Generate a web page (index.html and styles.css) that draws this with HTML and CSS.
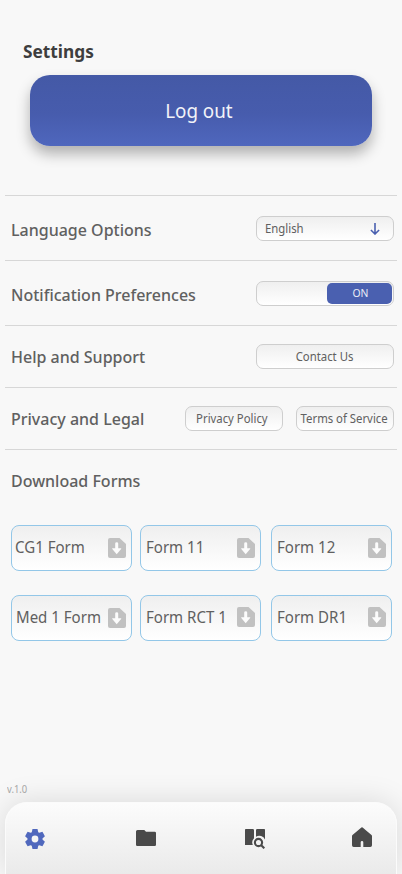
FILE: index.html
```html
<!DOCTYPE html>
<html lang="en">
<head>
<meta charset="utf-8">
<title>Settings</title>
<link rel="stylesheet" href="styles.css">
</head>
<body>
<svg class="defs" width="0" height="0" aria-hidden="true">
  <symbol id="download" viewBox="0 0 18 20">
    <path fill="#c1c1c1" d="M2 0h9.500l6.500 6v12a2 2 0 0 1-2 2H2a2 2 0 0 1-2-2V2a2 2 0 0 1 2-2z"/>
    <path fill="#fcfcfc" d="M7.200 5.500q0-1.200 1.500-1.200t1.500 1.200v4.800h2.900q.4.300 0 .8L8.700 16.200 4.300 11.100q-.4-.500 0-.8h2.900z"/>
  </symbol>
</svg>
<main class="screen">
  <h1 class="title"><span>Settings</span></h1>
  <button class="logout"><span>Log out</span></button>
  <section class="rows">
    <div class="row tall"><h2>Language Options</h2>
      <button class="pill wide select"><span class="label">English</span>
        <svg width="10" height="12" viewBox="0 0 10 12"><path d="M5 0v11M.900 7l4.100 4L9.100 7" fill="none" stroke="#4a60b0" stroke-width="1.600"/></svg>
      </button></div>
    <div class="row tall"><h2>Notification Preferences</h2>
      <div class="pill wide toggle"><span class="knob"><span class="label">ON</span></span></div></div>
    <div class="row"><h2>Help and Support</h2><button class="pill wide"><span class="label">Contact Us</span></button></div>
    <div class="row"><h2>Privacy and Legal</h2>
      <div class="pair"><button class="pill policy"><span class="label">Privacy Policy</span></button><button class="pill terms"><span class="label">Terms of Service</span></button></div></div>
    <div class="row"><h2>Download Forms</h2></div>
  </section>
  <section class="forms">
    <button class="form first"><span>CG1 Form</span><svg width="18" height="20"><use href="#download"/></svg></button>
    <button class="form"><span>Form 11</span><svg width="18" height="20"><use href="#download"/></svg></button>
    <button class="form"><span>Form 12</span><svg width="18" height="20"><use href="#download"/></svg></button>
    <button class="form med"><span>Med 1 Form</span><svg width="18" height="20"><use href="#download"/></svg></button>
    <button class="form raised"><span>Form RCT 1</span><svg width="18" height="20"><use href="#download"/></svg></button>
    <button class="form raised"><span>Form DR1</span><svg width="18" height="20"><use href="#download"/></svg></button>
  </section>
  <p class="version"><span>v.1.0</span></p>
  <nav class="nav">
    <svg class="gear" width="20" height="20" viewBox="-10 -10 20 20">
      <g fill="#5068bd">
        <path id="tooth" d="M-2.500-10H2.500L3.400-6V6L2.500 10H-2.500L-3.400 6V-6z"/>
        <use href="#tooth" transform="rotate(60)"/>
        <use href="#tooth" transform="rotate(120)"/>
        <circle r="7.400"/>
      </g>
      <circle r="3.400" fill="#f5f5f5"/>
    </svg>
    <svg class="folder" width="20" height="16" viewBox="0 0 20 16"><path fill="#4a4a4a" d="M1.500 0H8.300l1.700 1.800h8.700A1.300 1.300 0 0 1 20 3.100v11.600a1.300 1.300 0 0 1-1.300 1.300H1.300A1.300 1.300 0 0 1 0 14.700V1.500A1.500 1.500 0 0 1 1.500 0z"/></svg>
    <svg class="book" width="20" height="20" viewBox="0 0 20 20">
      <path fill="#4a4a4a" d="M.800 0H7.800Q9 0 9 1.200V9.300a6 6 0 0 0-1.200 6.700H0V.8Q0 0 .8 0zM11 1.200Q11 0 12.200 0H19.200Q20 0 20 .8V10.500a6.300 6.300 0 0 0-9-2.800z"/>
      <circle cx="13.500" cy="13.500" r="3.600" fill="none" stroke="#4a4a4a" stroke-width="2.100"/><path d="M16 16l3.300 3.300" stroke="#4a4a4a" stroke-width="2.100"/>
    </svg>
    <svg class="home" width="20" height="20" viewBox="0 0 20 20"><path fill="#4a4a4a" d="M9.400.400q.6-.500 1.200 0L19.500 8q.5.500.5 1.200V18.300a1.700 1.700 0 0 1-1.700 1.700H11.300v-4.700a1.300 1.300 0 0 0-2.600 0V20H1.700A1.700 1.700 0 0 1 0 18.300V9.200Q0 8.500.5 8z"/></svg>
  </nav>
</main>
</body>
</html>
```
FILE: styles.css
```css
* { box-sizing: border-box; }
body { margin: 0; background: #f8f8f8; font-family: "Noto Sans", sans-serif; color: #606060; }
.defs { position: absolute; }
button { font: inherit; color: inherit; padding: 0; border: 0; }
.screen { width: 402px; height: 874px; display: flex; flex-direction: column; overflow: hidden; }
.title { margin: 39px 0 0 23px; height: 36px; font-size: 18px; line-height: 25px; font-weight: 700; color: #3e3e3e; }
.title span { display: inline-block; transform: scaleX(.96); transform-origin: left; }
.logout { flex: none; width: 342px; height: 71px; margin-left: 30px; border-radius: 20px; background: linear-gradient(#4459a6, #475cad 55%, #4f67bd); box-shadow: 0 8px 14px rgba(0,0,0,.29); color: #f2f3f8; font-size: 20px; padding-right: 4px; }
.logout span { display: inline-block; transform: scaleX(.94); }
.rows { margin: 49px 5px 0; }
.row { height: 62px; border-top: 1px solid #d7d7d7; display: flex; justify-content: space-between; align-items: center; padding: 0 3px 0 6px; }
.row.tall { height: 65px; }
.row h2 { margin: 0; font-size: 16px; font-weight: 500; line-height: 22px; }
.tall h2 { padding-top: 4px; }
.tall .pill { margin-top: 1px; }
.pair { display: flex; gap: 13px; }
.pill { height: 25px; width: 98px; border: 1px solid #cecece; border-radius: 7px; background: linear-gradient(#efefef, #fff); font-size: 12px; white-space: nowrap; display: flex; align-items: center; justify-content: center; }
.label { display: inline-block; transform: scaleX(.945); }
.policy { padding-right: 4px; }
.terms { padding-right: 2px; }
.pill.wide { width: 138px; }
.select { justify-content: space-between; padding: 0 13px 0 8px; }
.select .label { transform-origin: left; }
.pill.toggle { justify-content: flex-end; padding-right: 1px; }
.knob { width: 65px; height: 21px; border-radius: 5px; background: #4a60b0; color: #e9ecf6; font-size: 11px; line-height: 20px; text-align: center; padding-left: 2px; }
.forms { display: grid; grid-template-columns: 121px 121px 121px; column-gap: 9px; row-gap: 24px; margin: 14px 0 0 11px; }
.form { height: 46px; border: 1px solid #93c7e8; border-radius: 8px; background: linear-gradient(#efefef, #fff); display: flex; align-items: center; justify-content: space-between; padding: 0 5px; font-size: 16px; line-height: 22px; white-space: nowrap; }
.form:nth-child(3n+2) { margin: 0 1px 0 -1px; }
.form span { width: 86px; text-align: left; transform: scaleX(.94); transform-origin: left; padding-bottom: 2px; }
.form svg { flex: none; }
.form.first { padding-left: 3px; }
.form.med { padding-left: 4px; }
.raised svg { margin-bottom: 2px; }
.version { margin: auto 0 6px 7px; font-size: 10px; line-height: 14px; color: #a6a6a6; }
.version span { display: inline-block; transform: scaleX(.94); transform-origin: left; }
.nav { flex: none; height: 72px; margin: 0 5px; border: 1px solid #fbfbfb; border-bottom: 0; border-radius: 22px 22px 0 0; background: linear-gradient(#fcfcfc, #eaeaea); box-shadow: 0 0 30px rgba(0,0,0,.13); display: flex; align-items: flex-start; padding: 24px 24px 0 19px; }
.gear { margin-top: 2px; }
.folder { margin: 3px 0 0 91px; }
.book { margin: 2px 0 0 89px; }
.home { margin-left: auto; }
```
